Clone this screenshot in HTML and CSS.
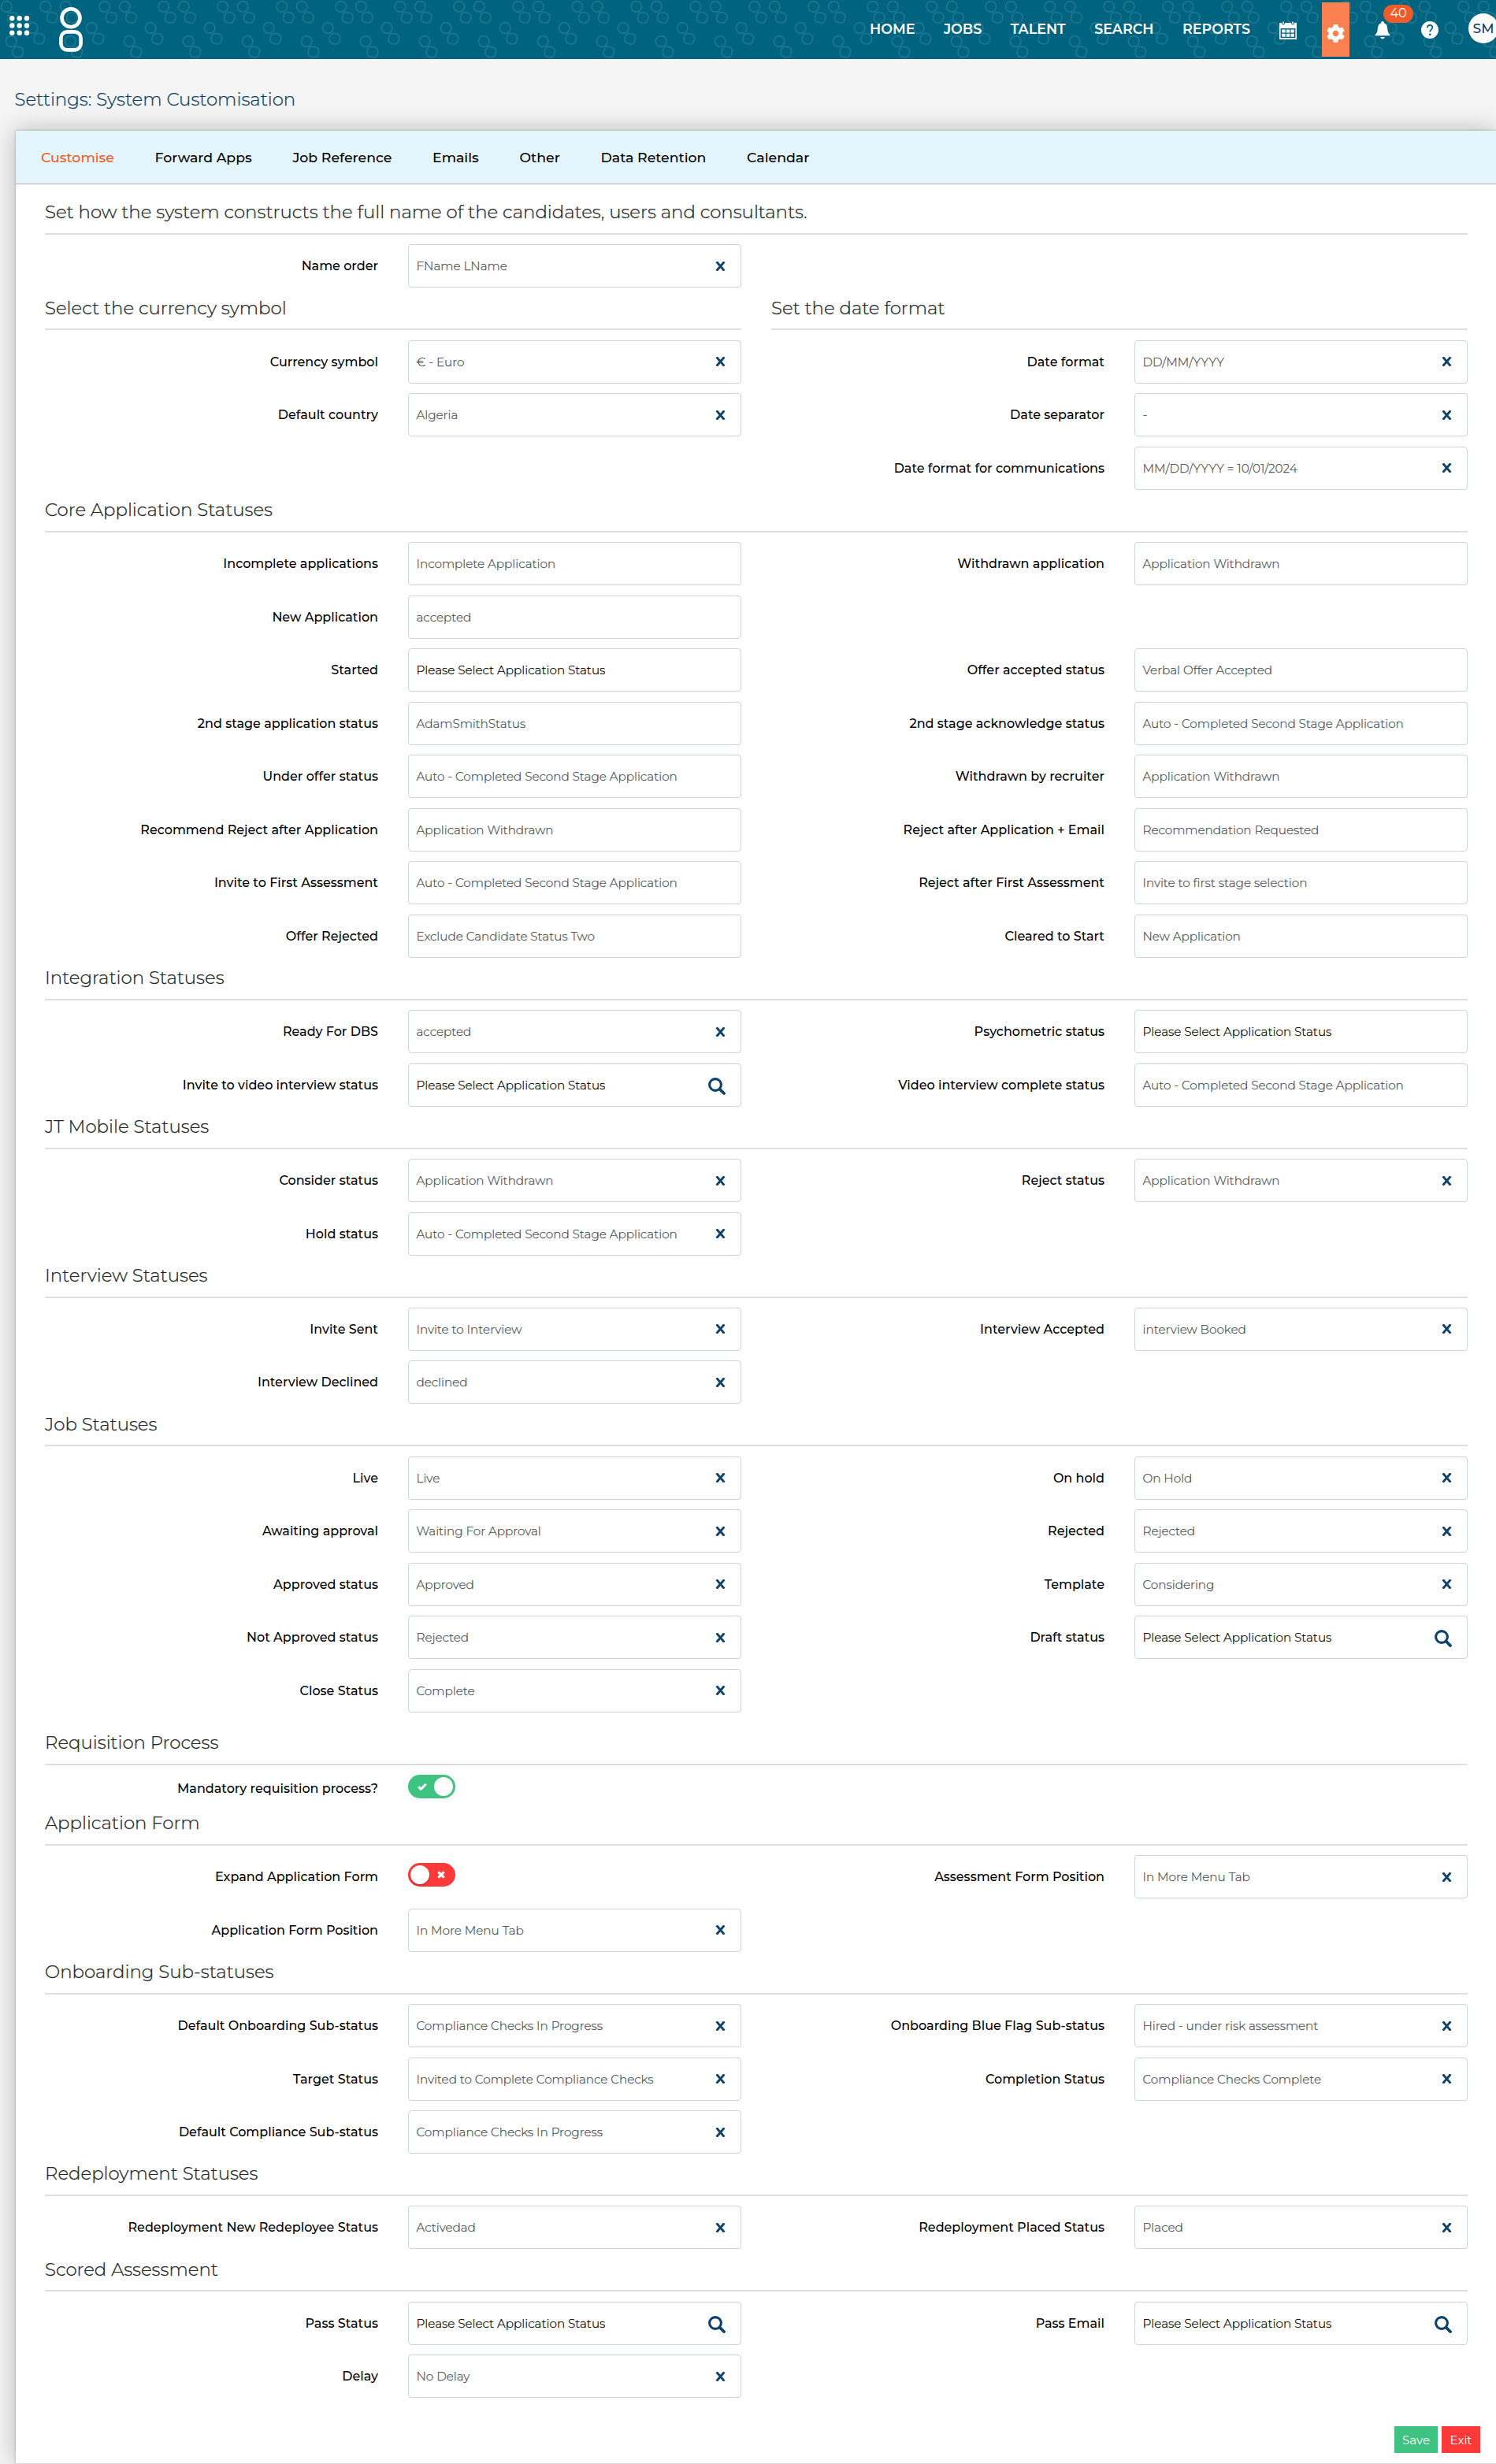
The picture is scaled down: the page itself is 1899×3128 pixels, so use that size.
FILE: index.html
```html
<!DOCTYPE html>
<html lang="en">
<head>
<meta charset="utf-8">
<title>Settings: System Customisation</title>
<link rel="stylesheet" href="styles.css">
</head>
<body>
<svg class="sprite" aria-hidden="true">
  <symbol id="x" viewBox="0 0 13 12"><path d="M1.600 .3l9.800 11.400M11.400 .3L1.600 11.700" fill="none" stroke="currentColor" stroke-width="2.900"/></symbol>
  <symbol id="s" viewBox="0 0 22 22"><circle cx="9" cy="9" r="7.4" fill="none" stroke="currentColor" stroke-width="3.1"/><path d="M14.6 14.6l5.4 5.4" fill="none" stroke="currentColor" stroke-width="3.8" stroke-linecap="round"/></symbol>
</svg>

<header class="topbar">
  <svg class="pattern" aria-hidden="true">
    <defs><pattern id="eights" width="75" height="75" patternUnits="userSpaceOnUse">
      <g fill="none" stroke="#1c7690" stroke-width="1.7">
        <circle cx="8.3" cy="8.4" r="6.8"/><rect x="9.8" y="15.8" width="13" height="13" rx="5" transform="rotate(12 16.3 22.3)"/>
        <circle cx="57.8" cy="8.4" r="6.8"/><rect x="59.7" y="15.8" width="13" height="13" rx="5" transform="rotate(12 66.2 22.3)"/>
        <circle cx="41.2" cy="35.5" r="6.8"/><rect x="43.3" y="42.7" width="13" height="13" rx="5" transform="rotate(12 49.8 49.2)"/>
        <circle cx="14.2" cy="52.5" r="6.8"/><rect x="16.3" y="59.5" width="13" height="13" rx="5" transform="rotate(12 22.8 66)"/>
      </g></pattern></defs>
    <rect width="100%" height="75" fill="url(#eights)"/>
  </svg>
  <svg class="apps" viewBox="0 0 26 26" fill="#fff"><circle cx="3.3" cy="3.3" r="3.2"/><circle cx="12.7" cy="3.3" r="3.2"/><circle cx="22" cy="3.3" r="3.2"/><circle cx="3.3" cy="12.5" r="3.2"/><circle cx="12.7" cy="12.5" r="3.2"/><circle cx="22" cy="12.5" r="3.2"/><circle cx="3.3" cy="21.8" r="3.2"/><circle cx="12.7" cy="21.8" r="3.2"/><circle cx="22" cy="21.8" r="3.2"/></svg>
  <svg class="logo" viewBox="0 0 30 57" fill="none" stroke="#fff" stroke-width="4.6"><circle cx="15" cy="13.8" r="11.5"/><rect x="2.4" y="31.4" width="25.2" height="23" rx="8"/></svg>
  <nav class="nav"><a>HOME</a><a>JOBS</a><a>TALENT</a><a>SEARCH</a><a>REPORTS</a></nav>
  <svg class="cal" viewBox="0 0 22 23"><path fill="#fff" fill-rule="evenodd" d="M0 2h3a2 2.6 0 0 0 4 0h8a2 2.6 0 0 0 4 0h3v21H0zM1.6 9v12.2h18.8V9z"/><path stroke="#fff" stroke-width="1.5" stroke-linecap="round" d="M5 .9v2M17 .9v2"/><path fill="#fff" d="M3.2 10.6h4.4v4H3.2zM8.8 10.6h4.4v4H8.8zM14.4 10.6h4.4v4h-4.4zM3.2 15.8h4.4v4H3.2zM8.8 15.8h4.4v4H8.8zM14.4 15.8h4.4v4h-4.4z"/></svg>
  <div class="cog"><svg viewBox="8 8 496 496"><path fill="#fff" d="M487.400 315.700l-42.600-24.600c4.300-23.200 4.300-47 0-70.200l42.600-24.600c4.900-2.800 7.100-8.600 5.500-14-11.100-35.600-30-67.800-54.700-94.600-3.800-4.100-10-5.100-14.800-2.300L380.800 110c-17.900-15.400-38.500-27.300-60.800-35.100V25.800c0-5.600-3.900-10.500-9.400-11.700-36.700-8.200-74.300-7.800-109.200 0-5.500 1.200-9.400 6.100-9.400 11.700V75c-22.200 7.900-42.800 19.800-60.800 35.100L88.700 85.500c-4.900-2.800-11-1.900-14.800 2.300-24.700 26.700-43.600 58.900-54.700 94.600-1.700 5.400.6 11.200 5.500 14L67.300 221c-4.300 23.200-4.300 47 0 70.200l-42.600 24.600c-4.900 2.800-7.100 8.600-5.500 14 11.100 35.600 30 67.800 54.700 94.600 3.800 4.100 10 5.100 14.800 2.300l42.600-24.600c17.900 15.400 38.500 27.300 60.800 35.100v49.200c0 5.600 3.900 10.500 9.400 11.700 36.700 8.200 74.300 7.800 109.200 0 5.500-1.200 9.400-6.100 9.400-11.700v-49.200c22.200-7.900 42.800-19.800 60.800-35.100l42.600 24.600c4.900 2.800 11 1.900 14.800-2.300 24.700-26.700 43.600-58.900 54.700-94.600 1.500-5.500-.7-11.300-5.600-14.100zM256 336c-44.100 0-80-35.900-80-80s35.900-80 80-80 80 35.900 80 80-35.900 80-80 80z"/></svg></div>
  <div class="bell"><svg viewBox="0 0 20 23" fill="#fff"><path d="M10 0c1.300 0 1.900.8 1.900 2.200C15 3.300 16 6 16.200 9c.3 4.500 1 6.300 3.300 8.200v1.100H.5v-1.100C2.800 15.300 3.500 13.500 3.800 9 4 6 5 3.300 8.100 2.200 8.100.8 8.700 0 10 0zM7.300 20h5.400c-.3 1.500-1.300 2.300-2.700 2.300S7.600 21.500 7.300 20z"/></svg><span class="badge">40</span></div>
  <svg class="help" viewBox="0 0 22 22"><circle cx="11" cy="11" r="11" fill="#fff"/><path d="M7.800 8.200c0-2.200 1.400-3.400 3.300-3.400s3.200 1.200 3.200 3c0 2.700-3.100 2.800-3.100 5.800" fill="none" stroke="#00637f" stroke-width="1.700"/><circle cx="11.200" cy="16.800" r="1.300" fill="#00637f"/></svg>
  <div class="avatar">SM</div>
</header>

<h1 class="page-title">Settings: System Customisation</h1>

<main class="panel">
  <div class="tabs"><a class="active">Customise</a><a>Forward Apps</a><a>Job Reference</a><a>Emails</a><a>Other</a><a>Data Retention</a><a>Calendar</a></div>
  <div class="content">

    <h2 class="first">Set how the system constructs the full name of the candidates, users and consultants.</h2>
    <div class="rows">
      <div class="field"><label>Name order</label><div class="box">FName LName<svg class="x"><use href="#x"/></svg></div></div>
    </div>

    <div class="halves">
      <section>
        <h2>Select the currency symbol</h2>
        <div class="rows single">
          <div class="field"><label>Currency symbol</label><div class="box">€ - Euro<svg class="x"><use href="#x"/></svg></div></div>
          <div class="field"><label>Default country</label><div class="box">Algeria<svg class="x"><use href="#x"/></svg></div></div>
        </div>
      </section>
      <section>
        <h2>Set the date format</h2>
        <div class="rows single">
          <div class="field"><label>Date format</label><div class="box">DD/MM/YYYY<svg class="x"><use href="#x"/></svg></div></div>
          <div class="field"><label>Date separator</label><div class="box">-<svg class="x"><use href="#x"/></svg></div></div>
          <div class="field"><label>Date format for communications</label><div class="box">MM/DD/YYYY = 10/01/2024<svg class="x"><use href="#x"/></svg></div></div>
        </div>
      </section>
    </div>

    <h2>Core Application Statuses</h2>
    <div class="rows">
      <div class="field"><label>Incomplete applications</label><div class="box">Incomplete Application</div></div>
      <div class="field"><label>Withdrawn application</label><div class="box">Application Withdrawn</div></div>
      <div class="field left"><label>New Application</label><div class="box">accepted</div></div>
      <div class="field left"><label>Started</label><div class="box empty">Please Select Application Status</div></div>
      <div class="field"><label>Offer accepted status</label><div class="box">Verbal Offer Accepted</div></div>
      <div class="field"><label>2nd stage application status</label><div class="box">AdamSmithStatus</div></div>
      <div class="field"><label>2nd stage acknowledge status</label><div class="box">Auto - Completed Second Stage Application</div></div>
      <div class="field"><label>Under offer status</label><div class="box">Auto - Completed Second Stage Application</div></div>
      <div class="field"><label>Withdrawn by recruiter</label><div class="box">Application Withdrawn</div></div>
      <div class="field"><label>Recommend Reject after Application</label><div class="box">Application Withdrawn</div></div>
      <div class="field"><label>Reject after Application + Email</label><div class="box">Recommendation Requested</div></div>
      <div class="field"><label>Invite to First Assessment</label><div class="box">Auto - Completed Second Stage Application</div></div>
      <div class="field"><label>Reject after First Assessment</label><div class="box">Invite to first stage selection</div></div>
      <div class="field"><label>Offer Rejected</label><div class="box">Exclude Candidate Status Two</div></div>
      <div class="field"><label>Cleared to Start</label><div class="box">New Application</div></div>
    </div>

    <h2>Integration Statuses</h2>
    <div class="rows">
      <div class="field"><label>Ready For DBS</label><div class="box">accepted<svg class="x"><use href="#x"/></svg></div></div>
      <div class="field"><label>Psychometric status</label><div class="box empty">Please Select Application Status</div></div>
      <div class="field"><label>Invite to video interview status</label><div class="box empty">Please Select Application Status<svg class="s"><use href="#s"/></svg></div></div>
      <div class="field"><label>Video interview complete status</label><div class="box">Auto - Completed Second Stage Application</div></div>
    </div>

    <h2>JT Mobile Statuses</h2>
    <div class="rows">
      <div class="field"><label>Consider status</label><div class="box">Application Withdrawn<svg class="x"><use href="#x"/></svg></div></div>
      <div class="field"><label>Reject status</label><div class="box">Application Withdrawn<svg class="x"><use href="#x"/></svg></div></div>
      <div class="field"><label>Hold status</label><div class="box">Auto - Completed Second Stage Application<svg class="x"><use href="#x"/></svg></div></div>
    </div>

    <h2>Interview Statuses</h2>
    <div class="rows">
      <div class="field"><label>Invite Sent</label><div class="box">Invite to Interview<svg class="x"><use href="#x"/></svg></div></div>
      <div class="field"><label>Interview Accepted</label><div class="box">interview Booked<svg class="x"><use href="#x"/></svg></div></div>
      <div class="field"><label>Interview Declined</label><div class="box">declined<svg class="x"><use href="#x"/></svg></div></div>
    </div>

    <h2>Job Statuses</h2>
    <div class="rows">
      <div class="field"><label>Live</label><div class="box">Live<svg class="x"><use href="#x"/></svg></div></div>
      <div class="field"><label>On hold</label><div class="box">On Hold<svg class="x"><use href="#x"/></svg></div></div>
      <div class="field"><label>Awaiting approval</label><div class="box">Waiting For Approval<svg class="x"><use href="#x"/></svg></div></div>
      <div class="field"><label>Rejected</label><div class="box">Rejected<svg class="x"><use href="#x"/></svg></div></div>
      <div class="field"><label>Approved status</label><div class="box">Approved<svg class="x"><use href="#x"/></svg></div></div>
      <div class="field"><label>Template</label><div class="box">Considering<svg class="x"><use href="#x"/></svg></div></div>
      <div class="field"><label>Not Approved status</label><div class="box">Rejected<svg class="x"><use href="#x"/></svg></div></div>
      <div class="field"><label>Draft status</label><div class="box empty">Please Select Application Status<svg class="s"><use href="#s"/></svg></div></div>
      <div class="field"><label>Close Status</label><div class="box">Complete<svg class="x"><use href="#x"/></svg></div></div>
    </div>

    <h2 class="spaced">Requisition Process</h2>
    <div class="rows">
      <div class="field short"><label>Mandatory requisition process?</label><div class="switch on"><svg viewBox="0 0 12 10"><path d="M1.300 5.300l3 3L10.700 1.700" fill="none" stroke="#fff" stroke-width="3"/></svg><i></i></div></div>
    </div>

    <h2>Application Form</h2>
    <div class="rows">
      <div class="field"><label>Expand Application Form</label><div class="switch off"><i></i><svg viewBox="0 0 10 10"><path d="M1.300 1.300l7.400 7.400M8.700 1.300L1.300 8.700" fill="none" stroke="#fff" stroke-width="3.300"/></svg></div></div>
      <div class="field"><label>Assessment Form Position</label><div class="box">In More Menu Tab<svg class="x"><use href="#x"/></svg></div></div>
      <div class="field"><label>Application Form Position</label><div class="box">In More Menu Tab<svg class="x"><use href="#x"/></svg></div></div>
    </div>

    <h2>Onboarding Sub-statuses</h2>
    <div class="rows">
      <div class="field"><label>Default Onboarding Sub-status</label><div class="box">Compliance Checks In Progress<svg class="x"><use href="#x"/></svg></div></div>
      <div class="field"><label>Onboarding Blue Flag Sub-status</label><div class="box">Hired - under risk assessment<svg class="x"><use href="#x"/></svg></div></div>
      <div class="field"><label>Target Status</label><div class="box">Invited to Complete Compliance Checks<svg class="x"><use href="#x"/></svg></div></div>
      <div class="field"><label>Completion Status</label><div class="box">Compliance Checks Complete<svg class="x"><use href="#x"/></svg></div></div>
      <div class="field"><label>Default Compliance Sub-status</label><div class="box">Compliance Checks In Progress<svg class="x"><use href="#x"/></svg></div></div>
    </div>

    <h2>Redeployment Statuses</h2>
    <div class="rows">
      <div class="field"><label>Redeployment New Redeployee Status</label><div class="box">Activedad<svg class="x"><use href="#x"/></svg></div></div>
      <div class="field"><label>Redeployment Placed Status</label><div class="box">Placed<svg class="x"><use href="#x"/></svg></div></div>
    </div>

    <h2>Scored Assessment</h2>
    <div class="rows">
      <div class="field"><label>Pass Status</label><div class="box empty">Please Select Application Status<svg class="s"><use href="#s"/></svg></div></div>
      <div class="field"><label>Pass Email</label><div class="box empty">Please Select Application Status<svg class="s"><use href="#s"/></svg></div></div>
      <div class="field"><label>Delay</label><div class="box">No Delay<svg class="x"><use href="#x"/></svg></div></div>
    </div>
  </div>
  <div class="actions"><button class="save">Save</button><button class="exit">Exit</button></div>
</main>
</body>
</html>
```
FILE: styles.css
```css
* { box-sizing: border-box; }

body {
  margin: 0;
  height: 3128px;
  overflow: hidden;
  background: #f5f5f5;
  color: #212529;
  font-family: Montserrat, Inter, "Open Sans", sans-serif;
  font-size: 15.2px;
}

.sprite { position: absolute; width: 0; height: 0; }

/* Top bar */
.topbar {
  position: relative;
  display: flex;
  align-items: flex-start;
  height: 75px;
  background: #00637f;
  overflow: hidden;
}
.topbar > * { flex: none; }
.pattern { position: absolute; inset: 0; width: 100%; height: 75px; }
.apps, .logo, .nav, .cal, .cog, .bell, .help, .avatar { position: relative; }
.apps { width: 26px; height: 26px; margin: 20px 0 0 12px; }
.logo { width: 30px; height: 57px; margin: 9px 0 0 37px; }
.nav {
  display: flex;
  gap: 36.5px;
  margin: 26px 37px 0 auto;
  color: #fff;
  font-size: 17.5px;
  font-weight: 600;
  line-height: 22px;
}
.cal { width: 22px; height: 23px; margin-top: 27px; }
.cog {
  display: flex;
  width: 35px;
  height: 69px;
  margin: 3px 0 0 32px;
  padding: 28px 0 0 6px;
  background: #fb8050;
}
.cog svg { width: 23px; height: 23px; }
.bell { width: 20px; height: 23px; margin: 27px 0 0 32px; }
.bell svg { display: block; width: 20px; height: 23px; }
.badge {
  position: absolute;
  left: 11px;
  top: -21px;
  width: 38px;
  height: 23px;
  border-radius: 12px;
  background: #f15a29;
  color: #fff;
  font-size: 16px;
  line-height: 22px;
  text-align: center;
}
.help { width: 22px; height: 22px; margin: 27px 0 0 39px; }
.avatar {
  width: 38px;
  height: 38px;
  margin: 17px -3px 0 38px;
  border-radius: 50%;
  background: #fff;
  color: #0b3c61;
  font-size: 17px;
  font-weight: 500;
  line-height: 39px;
  text-align: center;
}

.page-title {
  margin: 0;
  padding: 37px 0 0 18.5px;
  height: 91px;
  color: #0b3c61;
  font-size: 22.85px;
  font-weight: 300;
  line-height: 28px;
  -webkit-text-stroke: .25px currentColor;
}

/* Panel */
.panel {
  display: flex;
  flex-direction: column;
  height: 2962px;
  margin-left: 20px;
  border-bottom: 1px solid #ddd;
  background: #fff;
  box-shadow: 0 0 3px rgba(0, 0, 0, .25), 0 0 30px rgba(0, 0, 0, .25);
}
.tabs {
  display: flex;
  gap: 51.7px;
  height: 68px;
  padding-left: 32px;
  border-bottom: 1px solid #adb1b3;
  background: #e3f4fa;
  color: #000;
  font-size: 17.35px;
  font-weight: 500;
  line-height: 67px;
}
.tabs .active { color: #f15a29; }

.content { padding: 0 36px 0 37px; }
h2 {
  height: 54px;
  margin: 0 0 12.32px;
  padding-top: 11.3px;
  border-bottom: 2px solid #dedede;
  font-size: 22.85px;
  font-weight: 300;
  line-height: 28px;
  white-space: nowrap;
  -webkit-text-stroke: .25px currentColor;
}
h2.first { height: 64px; padding-top: 21px; }
h2.spaced { margin-top: 12.6px; }

.rows, .halves { display: grid; grid-template-columns: 884px 884px; column-gap: 38px; }
.rows { row-gap: 12.56px; }
.rows.single { grid-template-columns: 884px; }
.left { grid-column: 1; }

.field { display: flex; align-items: center; gap: 38px; height: 55px; }
.field.short { height: 36px; }
.field label {
  width: 423px;
  color: #000;
  font-size: 16px;
  font-weight: 500;
  text-align: right;
  white-space: nowrap;
}
.box {
  display: flex;
  align-items: center;
  justify-content: space-between;
  width: 423px;
  height: 55px;
  padding: 0 19px 0 9.5px;
  border: 1px solid #ced4da;
  border-radius: 4px;
  background: #fff;
  color: #495057;
  font-weight: 300;
  white-space: nowrap;
  -webkit-text-stroke: .25px currentColor;
}
.box.empty { color: #000; }
.box svg { color: #0e416b; }
.box .x { width: 13px; height: 12px; overflow: visible; }
.box .s { width: 22px; height: 22px; margin-top: 3px; }

.switch {
  display: flex;
  align-items: center;
  width: 60px;
  height: 30px;
  margin-bottom: 6px;
  border-radius: 15px;
}
.switch i { width: 24px; height: 24px; border-radius: 50%; background: #fff; }
.switch.on { gap: 9px; padding-left: 12px; background: #3fc380; }
.switch.on svg { width: 12px; height: 10px; }
.switch.off { gap: 10px; padding-left: 3px; background: #ff3838; }
.switch.off i { box-shadow: 0 1px 2px rgba(0, 0, 0, .4); }
.switch.off svg { width: 10px; height: 10px; }

.actions { display: flex; justify-content: flex-end; gap: 5px; margin: auto 20px 13px 0; }
.actions button {
  height: 34px;
  padding: 0;
  border: 0;
  color: #fff;
  font-family: inherit;
  font-size: 15px;
}
.save { width: 55px; background: #3fc380; }
.exit { width: 49px; background: #ff3838; }
```
